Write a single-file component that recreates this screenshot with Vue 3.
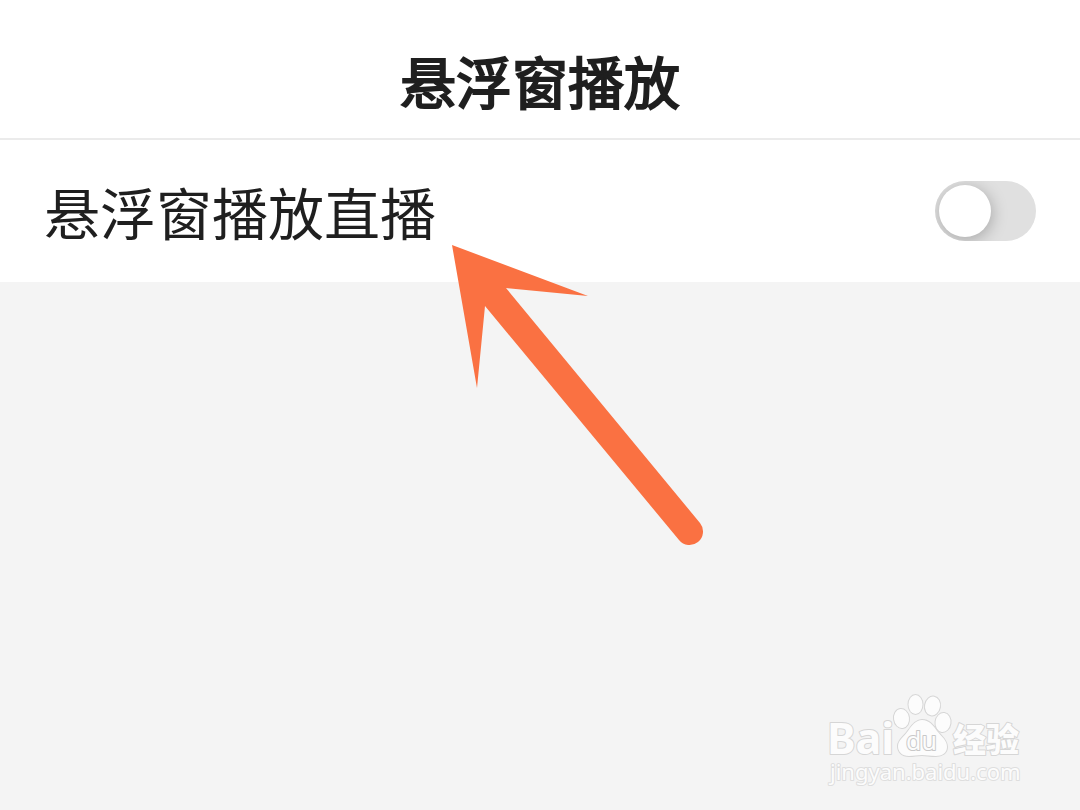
<script setup>
import { ref } from 'vue'

const floatLive = ref(false)
</script>

<template>
  <div class="page">
    <header class="bar">
      <h1 class="title">悬浮窗播放</h1>
    </header>
    <main>
      <div class="row">
        <label class="label" for="float-live">悬浮窗播放直播</label>
        <input id="float-live" v-model="floatLive" class="switch" type="checkbox" role="switch" />
      </div>
    </main>

    <svg class="arrow" width="260" height="310" viewBox="0 0 260 310" aria-hidden="true">
      <path d="M2 5 138 56 56 48 250 283A13.500 13.500 0 0 1 229 300L35 66 27 148Z" fill="#fa7142" />
    </svg>

    <svg class="mark" width="210" height="110" viewBox="0 0 210 110" role="img" aria-label="Baidu 经验">
      <g class="ink">
        <text class="latin" x="7" y="64">Bai</text>
        <ellipse cx="81.500" cy="28.500" rx="7.500" ry="9.500" transform="rotate(-8 81.500 28.500)" />
        <ellipse cx="95.500" cy="14.500" rx="7" ry="9.500" />
        <ellipse cx="112.500" cy="16" rx="7.500" ry="9.500" transform="rotate(10 112.500 16)" />
        <ellipse cx="123" cy="32.500" rx="7.500" ry="9.500" transform="rotate(8 123 32.500)" />
        <path d="M102 30C109 30 113 35 117 41C121 46 127 50 127 57C127 63 122 66 116 66C110 66 106 65 102 65C97 65 94 66 89 66C82 66 78 62 78 56C78 50 84 47 88 41C92 35 96 30 102 30Z" />
        <text class="du" x="86" y="60">du</text>
        <text class="han" x="133" y="62">经验</text>
        <text class="site" x="10" y="90">jingyan.baidu.com</text>
      </g>
    </svg>
  </div>
</template>

<style>
body {
  margin: 0;
  background: #f4f4f4;
}
</style>

<style scoped>
.page {
  position: relative;
  min-height: 100vh;
  overflow: hidden;
  background: #f4f4f4;
  color: #1f1f1f;
  font-family: "Noto Sans CJK SC", sans-serif;
}

.bar {
  padding: 40px 44px 18px;
  border-bottom: 2px solid #ebebeb;
  background: #fff;
  text-align: center;
}

.title {
  margin: 0;
  font-size: 56px;
  font-weight: 400;
  line-height: 80px;
  -webkit-text-stroke: 2px #1f1f1f;
}

.row {
  display: flex;
  align-items: center;
  justify-content: space-between;
  box-sizing: border-box;
  min-height: 142px;
  padding: 0 44px;
  background: #fff;
}

.label {
  font-size: 56px;
  line-height: 80px;
}

.switch {
  appearance: none;
  box-sizing: border-box;
  width: 101px;
  height: 60px;
  margin: 0;
  padding: 4px;
  border-radius: 30px;
  background: #e0e0e0;
  overflow: hidden;
  cursor: pointer;
}

.switch::before {
  content: "";
  display: block;
  width: 52px;
  height: 52px;
  border-radius: 50%;
  background: #fff;
  box-shadow: 1px 3px 16px rgba(0, 0, 0, 0.26);
}

.switch:checked {
  background: #fa7142;
}

.switch:checked::before {
  margin-left: auto;
}

.arrow {
  position: absolute;
  top: 240px;
  left: 450px;
  pointer-events: none;
}

.mark {
  position: absolute;
  right: 50px;
  bottom: 10px;
}

.ink {
  fill: #fcfcfc;
  stroke: #d6d6d6;
  stroke-width: 2px;
  stroke-linejoin: round;
  paint-order: stroke;
}

.latin {
  font: 700 43px "Noto Sans", sans-serif;
}

.du {
  font: 400 25px "Noto Sans", sans-serif;
  stroke: #c8c8c8;
}

.han {
  font: 900 33px "Noto Sans CJK SC", sans-serif;
}

.site {
  font: 400 22px "Noto Sans", sans-serif;
  stroke: #dedede;
}
</style>
